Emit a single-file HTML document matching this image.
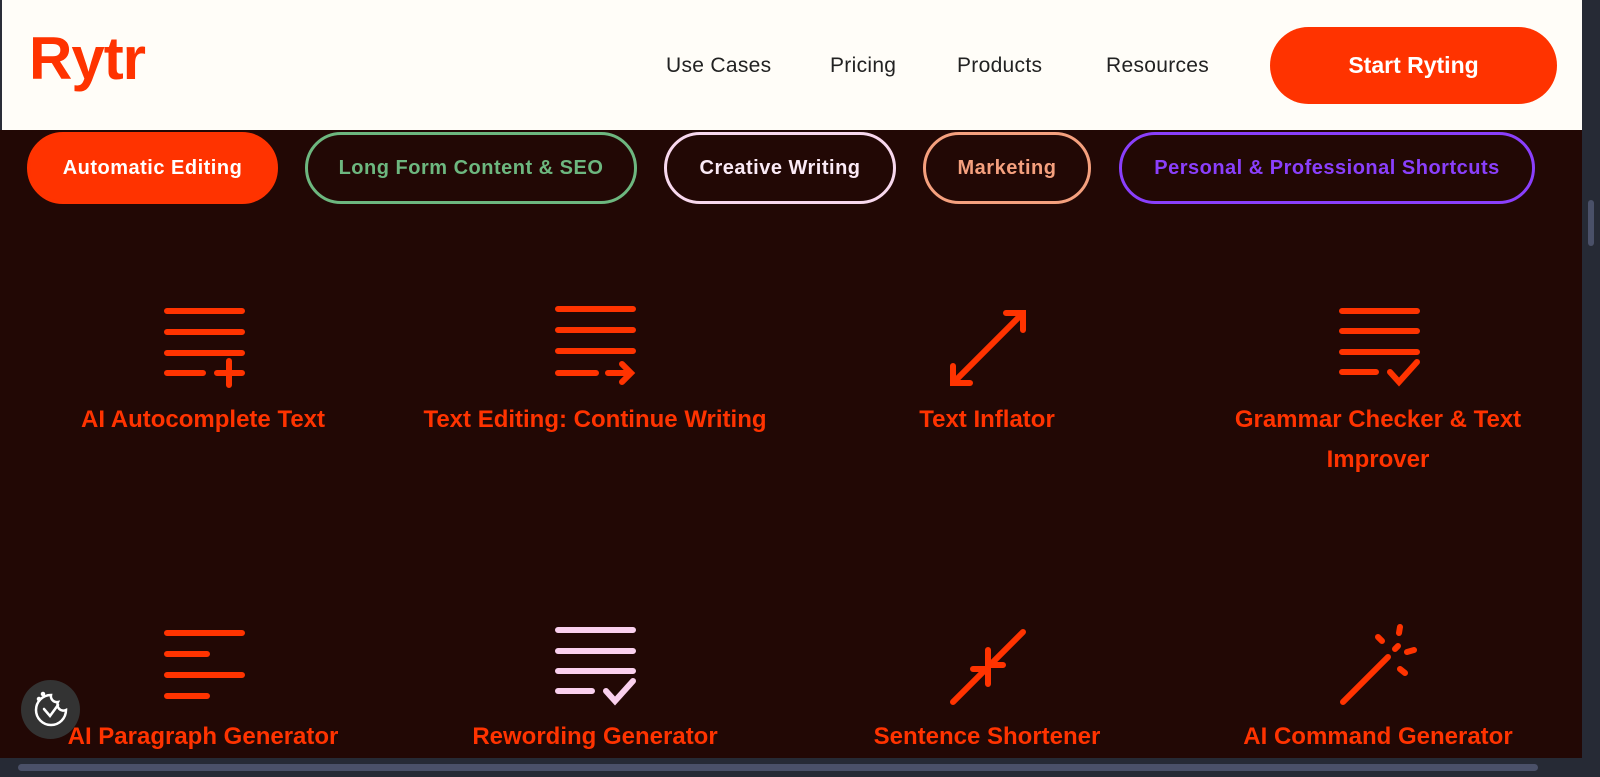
<!DOCTYPE html>
<html><head><meta charset="utf-8"><style>
*{margin:0;padding:0;box-sizing:border-box}
body{width:1600px;height:777px;overflow:hidden;background:#220805;font-family:"Liberation Sans",sans-serif;position:relative}
.hdr{position:absolute;left:0;top:0;width:1582px;height:130px;background:#fffdf8;border-left:2px solid #2a2d38}
.logo{position:absolute;left:27px;top:24px;font-size:60px;font-weight:bold;color:#ff3300;letter-spacing:-1px}
.nav{position:absolute;top:54px;font-size:21px;color:#222;letter-spacing:0.3px}
.btn{position:absolute;left:1268px;top:27px;width:287px;height:77px;border-radius:39px;background:#ff3300;color:#fff;font-weight:bold;font-size:23px;display:flex;align-items:center;justify-content:center}
.pill{position:absolute;top:132px;height:72px;border-radius:36px;border:3px solid;font-weight:bold;font-size:20px;letter-spacing:0.5px;display:flex;align-items:center;justify-content:center}
.lbl{position:absolute;width:384px;text-align:center;color:#ff3300;font-weight:bold;font-size:24px;line-height:40px}
svg.ic{position:absolute;overflow:visible}
.vs{position:absolute;left:1582px;top:0;width:18px;height:777px;background:#262a35}
.hs{position:absolute;left:0;top:758px;width:1600px;height:19px;background:#262a35}
</style></head><body>
<div class="hdr">
<div class="logo">Rytr</div>
<div class="nav" style="left:664px">Use Cases</div>
<div class="nav" style="left:828px">Pricing</div>
<div class="nav" style="left:955px">Products</div>
<div class="nav" style="left:1104px">Resources</div>
<div class="btn">Start Ryting</div>
</div>
<div class="pill" style="left:27px;width:251px;background:#ff3300;border-color:#ff3300;color:#fff">Automatic Editing</div>
<div class="pill" style="left:305px;width:332px;border-color:#6db77f;color:#6db77f">Long Form Content &amp; SEO</div>
<div class="pill" style="left:664px;width:232px;border-color:#f8d8ee;color:#fbeaf6">Creative Writing</div>
<div class="pill" style="left:923px;width:168px;border-color:#f5a07e;color:#f5a07e">Marketing</div>
<div class="pill" style="left:1119px;width:416px;border-color:#8a3ffc;color:#8a3ffc">Personal &amp; Professional Shortcuts</div>

<svg class="ic" style="left:165px;top:308px" width="80" height="80" stroke="#ff3300" stroke-width="6" stroke-linecap="round" fill="none">
<path d="M2 3H77M2 24H77M2 45H77M2 65H38M52 65H77M64 53V77"/></svg>
<svg class="ic" style="left:556px;top:306px" width="80" height="80" stroke="#ff3300" stroke-width="6" stroke-linecap="round" fill="none">
<path d="M2 3H77M2 24H77M2 45H77M2 67H40M52 67H75M66 58L75 67L66 76"/></svg>
<svg class="ic" style="left:948px;top:308px" width="80" height="80" stroke="#ff3300" stroke-width="6" stroke-linecap="round" fill="none">
<path d="M5 75L75 5M58 5H75V22M5 58V75H22"/></svg>
<svg class="ic" style="left:1340px;top:308px" width="80" height="80" stroke="#ff3300" stroke-width="6" stroke-linecap="round" fill="none">
<path d="M2 3H77M2 23H77M2 44H77M2 64H36M50 64L59 74L77 54"/></svg>

<div class="lbl" style="left:11px;top:400px">AI Autocomplete Text</div>
<div class="lbl" style="left:393px;top:400px;width:404px">Text Editing: Continue Writing</div>
<div class="lbl" style="left:795px;top:400px">Text Inflator</div>
<div class="lbl" style="left:1186px;top:400px;padding:0 36px">Grammar Checker &amp; Text Improver</div>

<svg class="ic" style="left:165px;top:630px" width="80" height="80" stroke="#ff3300" stroke-width="6" stroke-linecap="round" fill="none">
<path d="M2 3H77M2 24H42M2 45H77M2 66H42"/></svg>
<svg class="ic" style="left:556px;top:627px" width="80" height="80" stroke="#fad0ee" stroke-width="6" stroke-linecap="round" fill="none">
<path d="M2 3H77M2 24H77M2 44H77M2 64H36M50 64L59 74L77 54"/></svg>
<svg class="ic" style="left:948px;top:627px" width="80" height="80" stroke="#ff3300" stroke-width="6" stroke-linecap="round" fill="none">
<path d="M5 75L38 42M75 5L42 38M25 42H40V57M55 38H40V23"/></svg>
<svg class="ic" style="left:1340px;top:627px" width="80" height="80" stroke="#ff3300" stroke-width="6" stroke-linecap="round" fill="none">
<path d="M3 75L48 30M55 22L58 19M38 10L42 14M60 0L59 6M67 25L74 23M60 42L65 46"/></svg>

<div class="lbl" style="left:11px;top:717px">AI Paragraph Generator</div>
<div class="lbl" style="left:403px;top:717px">Rewording Generator</div>
<div class="lbl" style="left:795px;top:717px">Sentence Shortener</div>
<div class="lbl" style="left:1186px;top:717px">AI Command Generator</div>

<div style="position:absolute;left:21px;top:680px;width:59px;height:59px;border-radius:50%;background:#333"></div>
<svg class="ic" style="left:31px;top:690px" width="40" height="40" stroke="#fff" stroke-width="2.5" fill="none" stroke-linecap="round">
<path d="M20 5A15 15 0 1 0 35 20A6 6 0 0 1 27 12A6 6 0 0 1 20 5Z"/><path d="M13 19L19 26L27 15"/><circle cx="8" cy="9" r="1" fill="#fff"/><circle cx="12" cy="4" r="1" fill="#fff"/></svg>

<div class="vs"><div style="position:absolute;left:6px;top:200px;width:6px;height:46px;border-radius:3px;background:#4a5068"></div></div>
<div class="hs"><div style="position:absolute;left:18px;top:6px;width:1520px;height:7px;border-radius:4px;background:#4a5068"></div></div>
</body></html>
